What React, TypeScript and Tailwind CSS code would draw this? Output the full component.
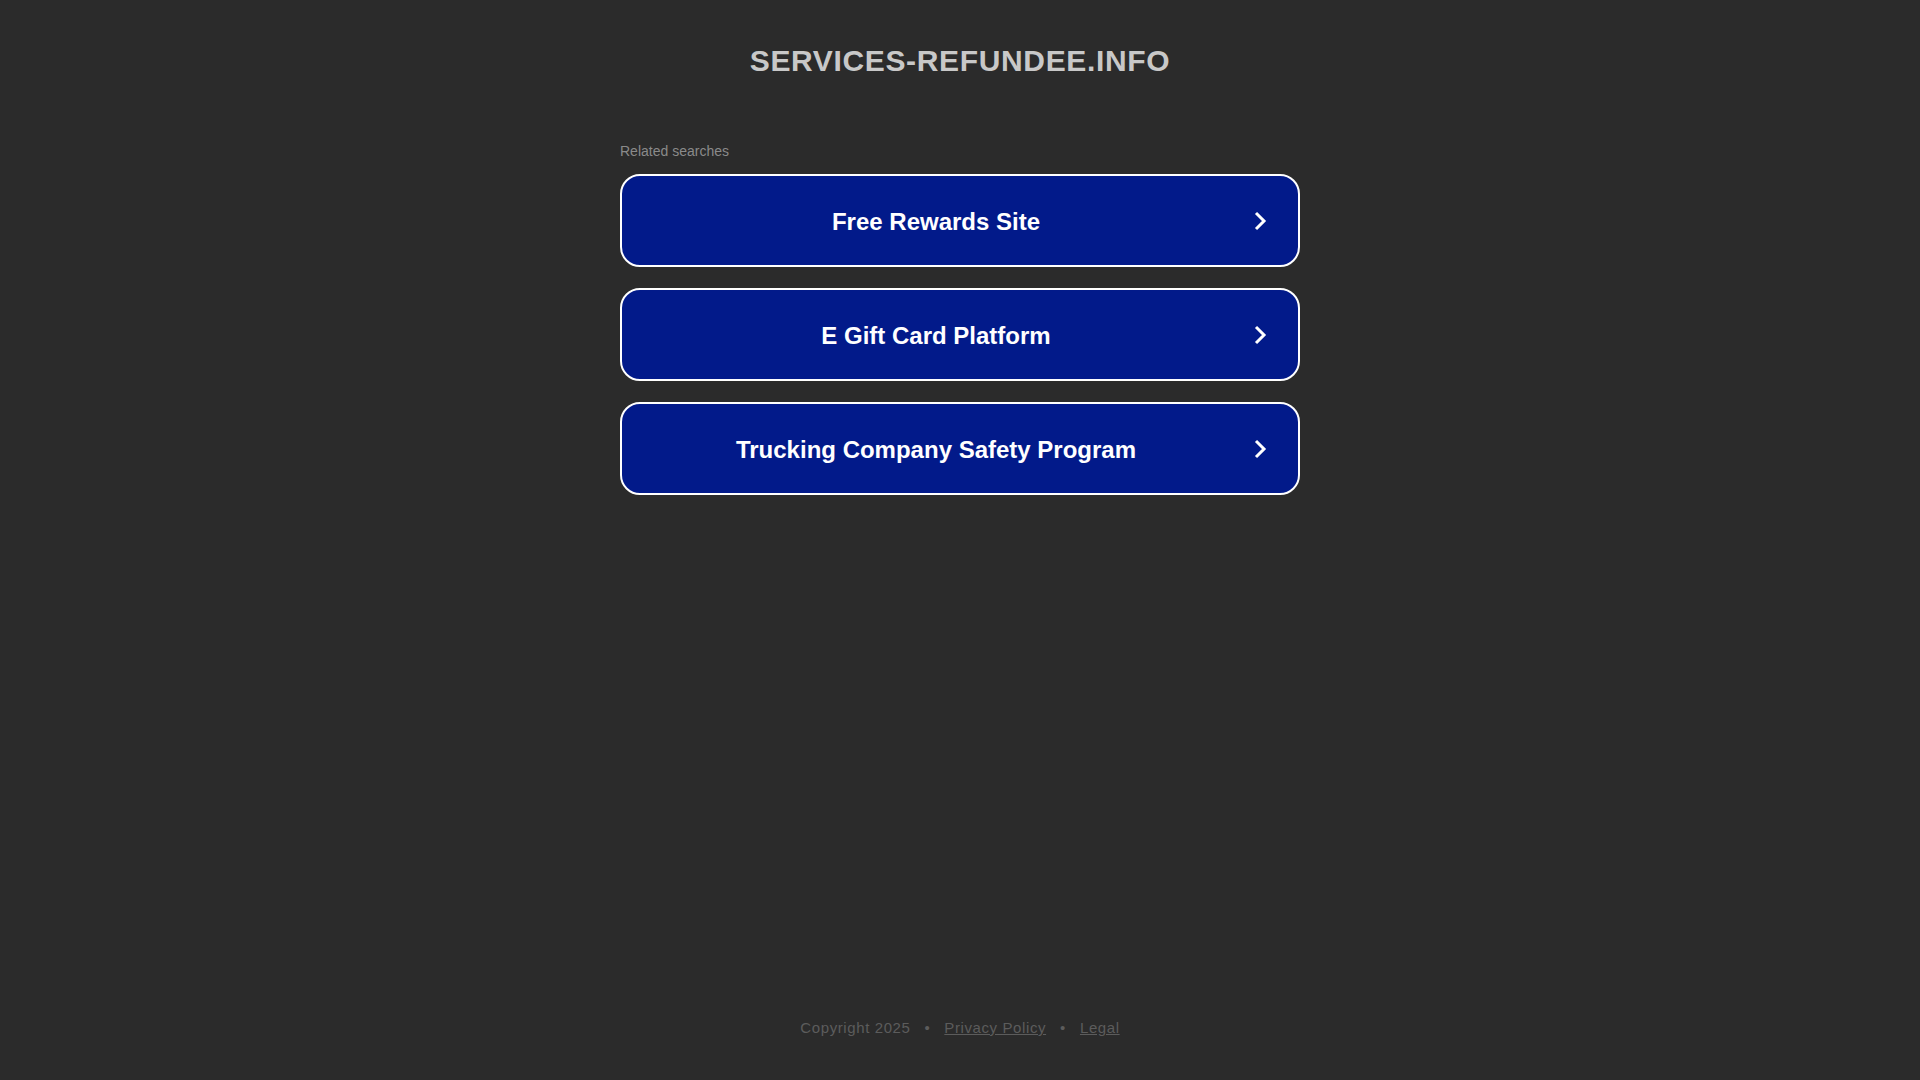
// dependencies
import { type FC } from "react";

// data
const searches: string[] = [
  "Free Rewards Site",
  "E Gift Card Platform",
  "Trucking Company Safety Program",
];

// chevron icon
const Chevron: FC = () => (
  <svg width="20" height="20" viewBox="0 0 20 20" fill="none" className="shrink-0">
    <polyline
      points="6,2 14,10 6,18"
      stroke="#ffffff"
      strokeWidth="3"
      strokeLinecap="butt"
      strokeLinejoin="miter"
    />
  </svg>
);

// search link box
const SearchLink: FC<{ label: string }> = ({ label }) => (
  <a
    href="#"
    className="flex items-center h-[93px] rounded-[20px] border-2 border-white bg-[#021a8a] pr-[28px] no-underline"
  >
    <span className="flex-1 pt-[2px] text-center text-[24px] font-bold text-white leading-[28px]">
      {label}
    </span>
    <Chevron />
  </a>
);

// main
const App: FC = () => {
  return (
    <div
      className="min-h-screen flex flex-col bg-[#2b2b2b]"
      style={{ fontFamily: '"Liberation Sans", Arial, sans-serif' }}
    >
      {/* Domain title */}
      <h1 className="mt-[44px] text-center text-[30px] leading-[34px] font-bold tracking-[0.65px] text-[#c8c8c8]">
        SERVICES-REFUNDEE.INFO
      </h1>

      {/* Related searches */}
      <div className="w-[680px] mx-auto mt-[65px]">
        <p className="text-[14px] leading-[16px] text-[#8a8a8a]">Related searches</p>
        <div className="mt-[15px] flex flex-col gap-[21px]">
          {searches.map((s) => (
            <SearchLink key={s} label={s} />
          ))}
        </div>
      </div>

      {/* Footer */}
      <footer className="mt-auto pb-[43px] flex justify-center items-center gap-[14px] text-[15px] leading-[18px] tracking-[0.6px] text-[#5c5c5c]">
        <span>Copyright 2025</span>
        <span>•</span>
        <a href="#" className="underline text-[#5c5c5c]">Privacy Policy</a>
        <span>•</span>
        <a href="#" className="underline text-[#5c5c5c]">Legal</a>
      </footer>
    </div>
  );
};

export default App;
